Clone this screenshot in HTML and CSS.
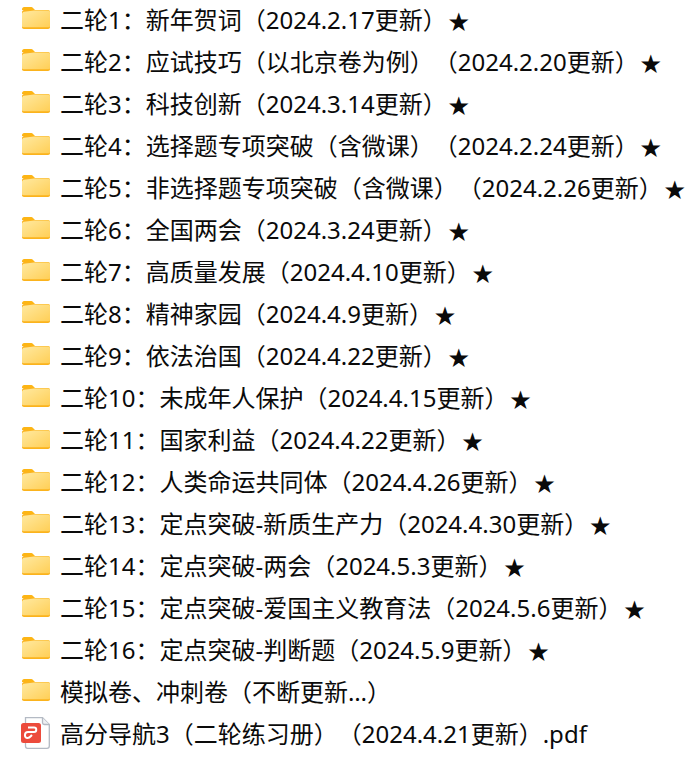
FILE: index.html
```html
<!DOCTYPE html>
<html lang="zh-CN">
<head>
  <meta charset="UTF-8">
  <meta name="viewport" content="width=device-width, initial-scale=1.0">
  <title>二轮</title>
  <link rel="stylesheet" href="styles.css">
</head>
<body>

  <svg width="0" height="0" class="defs">
    <defs>
      <linearGradient id="folderFill" x1="0" y1="0" x2="1" y2="1">
        <stop offset="0" stop-color="#ffe9a0"/>
        <stop offset="1" stop-color="#ffcf57"/>
      </linearGradient>
      <symbol id="folder" viewBox="0 0 28 22">
        <path d="M0 2.500C0 1 .8 0 2.200 0h6.300c1.300 0 2.100.5 3 1.400L13 3H0z" fill="#fdb515"/>
        <path d="M0 5.500C0 4 .8 3 2 3h24c1.300 0 2 .8 2 2v15c0 1.300-.7 2-2 2H2c-1.300 0-2-.7-2-2z" fill="#fbb31d"/>
        <path d="M0 7c0-1 .7-2 2-2.300L12 3.400h14c1.200 0 2 .7 2 1.800V19c0 .8-.6 1.200-1.500 1.200h-25C.6 20.200 0 19.800 0 19z" fill="url(#folderFill)"/>
      </symbol>
    </defs>
  </svg>

  <ul class="files">
    <li><svg class="icon"><use href="#folder"/></svg><span>二轮1：新年贺词（2024.2.17更新）<b class="star">★</b></span></li>
    <li><svg class="icon"><use href="#folder"/></svg><span>二轮2：应试技巧（以北京卷为例）（2024.2.20更新）<b class="star">★</b></span></li>
    <li><svg class="icon"><use href="#folder"/></svg><span>二轮3：科技创新（2024.3.14更新）<b class="star">★</b></span></li>
    <li><svg class="icon"><use href="#folder"/></svg><span>二轮4：选择题专项突破（含微课）（2024.2.24更新）<b class="star">★</b></span></li>
    <li><svg class="icon"><use href="#folder"/></svg><span>二轮5：非选择题专项突破（含微课）（2024.2.26更新）<b class="star">★</b></span></li>
    <li><svg class="icon"><use href="#folder"/></svg><span>二轮6：全国两会（2024.3.24更新）<b class="star">★</b></span></li>
    <li><svg class="icon"><use href="#folder"/></svg><span>二轮7：高质量发展（2024.4.10更新）<b class="star">★</b></span></li>
    <li><svg class="icon"><use href="#folder"/></svg><span>二轮8：精神家园（2024.4.9更新）<b class="star">★</b></span></li>
    <li><svg class="icon"><use href="#folder"/></svg><span>二轮9：依法治国（2024.4.22更新）<b class="star">★</b></span></li>
    <li><svg class="icon"><use href="#folder"/></svg><span>二轮10：未成年人保护（2024.4.15更新）<b class="star">★</b></span></li>
    <li><svg class="icon"><use href="#folder"/></svg><span>二轮11：国家利益（2024.4.22更新）<b class="star">★</b></span></li>
    <li><svg class="icon"><use href="#folder"/></svg><span>二轮12：人类命运共同体（2024.4.26更新）<b class="star">★</b></span></li>
    <li><svg class="icon"><use href="#folder"/></svg><span>二轮13：定点突破-新质生产力（2024.4.30更新）<b class="star">★</b></span></li>
    <li><svg class="icon"><use href="#folder"/></svg><span>二轮14：定点突破-两会（2024.5.3更新）<b class="star">★</b></span></li>
    <li><svg class="icon"><use href="#folder"/></svg><span>二轮15：定点突破-爱国主义教育法（2024.5.6更新）<b class="star">★</b></span></li>
    <li><svg class="icon"><use href="#folder"/></svg><span>二轮16：定点突破-判断题（2024.5.9更新）<b class="star">★</b></span></li>
    <li><svg class="icon"><use href="#folder"/></svg><span>模拟卷、冲刺卷（不断更新…）</span></li>
    <li>
      <svg class="icon pdf" viewBox="0 0 29 32">
        <path d="M4.500.7h17l6.800 6.800V29c0 1.300-.9 2.300-2.300 2.300H6.500c-1.300 0-2-1-2-2.300z" fill="#fff" stroke="#b4bac4" stroke-width="1.300"/>
        <path d="M21.500.7v5c0 1.200.7 1.800 1.800 1.800h5" fill="#eef0f3" stroke="#b4bac4" stroke-width="1.300"/>
        <rect x="0" y="6" width="20" height="20" rx="2.500" fill="#ec4b3c"/>
        <path d="M7 10.500h6c3 0 3 4.500 0 4.500H7c-4 0-4 6-.5 6 2 0 3-1.500 4.500-3" fill="none" stroke="#fff" stroke-width="2"/>
      </svg>
      <span>高分导航3（二轮练习册）（2024.4.21更新）.pdf</span>
    </li>
  </ul>

</body>
</html>
```

FILE: styles.css
```css
* {
  margin: 0;
  padding: 0;
  box-sizing: border-box;
}

body {
  font-family: "Noto Sans", "Noto Sans CJK SC", sans-serif;
  background: #fff;
  color: #0a0a0a;
  width: 690px;
  height: 762px;
  overflow: hidden;
}

.defs {
  display: block;
  height: 0;
}

.files {
  list-style: none;
  padding-left: 22px;
}

.files li {
  display: flex;
  align-items: center;
  height: 42px;
  white-space: nowrap;
  font-size: 24px;
  line-height: 42px;
  text-spacing-trim: space-all;
}

.files span {
  margin-top: -2px;
}

.star {
  display: inline-block;
  width: 24px;
  font-size: 21px;
  font-weight: normal;
  line-height: 20px;
  text-align: center;
}

.icon {
  width: 28px;
  height: 22px;
  flex: none;
  margin-right: 10px;
  margin-top: -6px;
}

.icon.pdf {
  width: 29px;
  height: 32px;
  margin-left: -1px;
  margin-top: -4px;
}
```
